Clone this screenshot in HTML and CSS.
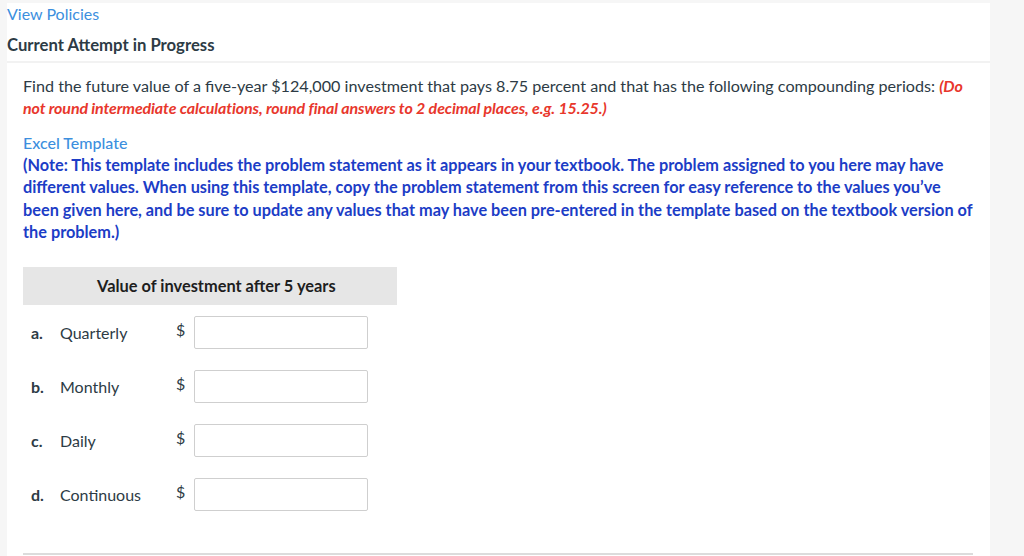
FILE: index.html
```html
<!DOCTYPE html>
<html>
<head>
<meta charset="utf-8">
<link rel="stylesheet" href="styles.css">
</head>
<body>
<div class="panel">
  <div class="top">
    <a class="policies">View Policies</a>
    <div class="attempt">Current Attempt in Progress</div>
  </div>
  <div class="content">
    <p class="question">Find the future value of a five-year $124,000 investment that pays 8.75 percent and that has the following compounding periods: <em class="warn">(Do not round intermediate calculations, round final answers to 2 decimal places, e.g. 15.25.)</em></p>
    <div class="excel">
      <a class="excel-link">Excel Template</a>
      <div class="note">(Note: This template includes the problem statement as it appears in your textbook. The problem assigned to you here may have different values. When using this template, copy the problem statement from this screen for easy reference to the values you’ve been given here, and be sure to update any values that may have been pre-entered in the template based on the textbook version of the problem.)</div>
    </div>
    <div class="table">
      <div class="thead">Value of investment after 5 years</div>
      <div class="rows">
        <div class="row"><span class="letter">a.</span><span class="label">Quarterly</span><span class="dollar">$</span><span class="input"></span></div>
        <div class="row"><span class="letter">b.</span><span class="label">Monthly</span><span class="dollar">$</span><span class="input"></span></div>
        <div class="row"><span class="letter">c.</span><span class="label">Daily</span><span class="dollar">$</span><span class="input"></span></div>
        <div class="row"><span class="letter">d.</span><span class="label">Continuous</span><span class="dollar">$</span><span class="input"></span></div>
      </div>
    </div>
    <div class="bottom-rule"></div>
  </div>
</div>
</body>
</html>
```
FILE: styles.css
```css
html, body {
  margin: 0;
  padding: 0;
  background: #f6f6f6;
  font-family: Lato, "Open Sans", sans-serif;
  color: #2d3b45;
}
.panel {
  margin: 3px 0 0 7px;
  width: 983px;
  height: 560px;
  background: #ffffff;
}
.top {
  padding: 1px 0 0 0;
  border-bottom: 2px solid #f2f2f2;
  height: 60px;
  box-sizing: border-box;
}
.policies {
  display: block;
  color: #3c8fde;
  font-size: 16px;
  line-height: 20px;
}
.attempt {
  margin-top: 11px;
  font-size: 16.7px;
  font-weight: bold;
  line-height: 20px;
  color: #2d3b45;
}
.content {
  padding: 12px 12px 0 16px;
}
.question {
  margin: 0;
  font-size: 16.15px;
  line-height: 22px;
  color: #2d3b45;
}
.warn {
  color: #e8372c;
  font-weight: bold;
  font-style: italic;
  font-size: 16px;
  letter-spacing: -0.12px;
}
.excel {
  margin-top: 12px;
}
.excel-link {
  display: block;
  color: #3c8fde;
  font-size: 16px;
  font-weight: 500;
  line-height: 23px;
}
.note {
  color: #1c3dc6;
  font-weight: bold;
  font-size: 16.3px;
  line-height: 22.4px;
}
.table {
  margin-top: 23px;
  width: 374px;
}
.thead {
  background: #e6e6e6;
  height: 38px;
  line-height: 38px;
  font-weight: bold;
  font-size: 16.4px;
  color: #1e1e1e;
  padding-left: 74px;
}
.rows {
  padding-top: 1px;
}
.row {
  display: flex;
  align-items: center;
  height: 54px;
  font-size: 16px;
}
.letter {
  width: 29px;
  padding-left: 8px;
  font-weight: bold;
  color: #2d3b45;
}
.label {
  width: 116px;
}
.dollar {
  width: 18px;
  margin-top: -6px;
}
.input {
  width: 172px;
  height: 31px;
  border: 1px solid #cfcfcf;
  border-radius: 2px;
}
.bottom-rule {
  margin-top: 31px;
  width: 950px;
  height: 2px;
  background: #dcdcdc;
}
```
